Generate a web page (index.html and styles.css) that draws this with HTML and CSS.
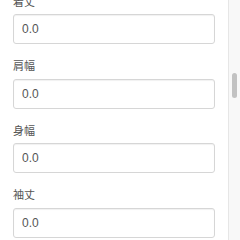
FILE: index.html
```html
<!DOCTYPE html>
<html lang="ja">
<head>
    <meta charset="UTF-8">
    <meta name="viewport" content="width=device-width, initial-scale=1.0">
    <title>サイズ入力</title>
    <link rel="stylesheet" href="styles.css">
</head>
<body>
    <div class="panel">
        <div class="form-list">
            <div class="form-group">
                <label class="form-label">着丈</label>
                <input class="form-control" type="text" value="0.0">
            </div>
            <div class="form-group">
                <label class="form-label">肩幅</label>
                <input class="form-control" type="text" value="0.0">
            </div>
            <div class="form-group">
                <label class="form-label">身幅</label>
                <input class="form-control" type="text" value="0.0">
            </div>
            <div class="form-group">
                <label class="form-label">袖丈</label>
                <input class="form-control" type="text" value="0.0">
            </div>
        </div>

        <div class="scroll-track">
            <div class="scroll-thumb"></div>
        </div>
    </div>
</body>
</html>
```

FILE: styles.css
```css
html, body {
    margin: 0;
    padding: 0;
    background: #fff;
}

body {
    font-family: "Liberation Sans", Arial, "Noto Sans CJK JP", sans-serif;
    color: #555;
    width: 240px;
    height: 240px;
    overflow: hidden;
}

.panel {
    display: flex;
    height: 240px;
}

.form-list {
    flex: 1;
    padding: 0 12px 0 13px;
    margin-top: -6.5px;
    overflow: hidden;
}

.form-group {
    display: flex;
    flex-direction: column;
    margin-bottom: 14px;
}

.form-label {
    font-size: 11px;
    line-height: 16px;
    margin-bottom: 4.5px;
    color: #555;
}

.form-control {
    box-sizing: border-box;
    width: 202px;
    height: 30px;
    margin: 0;
    padding: 0 8px;
    font-family: "Liberation Sans", Arial, sans-serif;
    font-size: 12px;
    color: #555;
    background: #fff;
    border: 1px solid #d6d6d6;
    border-radius: 3px;
    box-shadow: inset 0 1px 1px rgba(0, 0, 0, 0.06);
    outline: none;
}

/* fake scrollbar column */
.scroll-track {
    width: 12px;
    flex: none;
    background: #f8f8f8;
    border-left: 1px solid #e6e6e6;
    padding-top: 73px;
    box-sizing: border-box;
    display: flex;
    flex-direction: column;
    align-items: center;
}

.scroll-thumb {
    width: 5px;
    height: 25px;
    border-radius: 3px;
    background: #c2c2c2;
}
```
